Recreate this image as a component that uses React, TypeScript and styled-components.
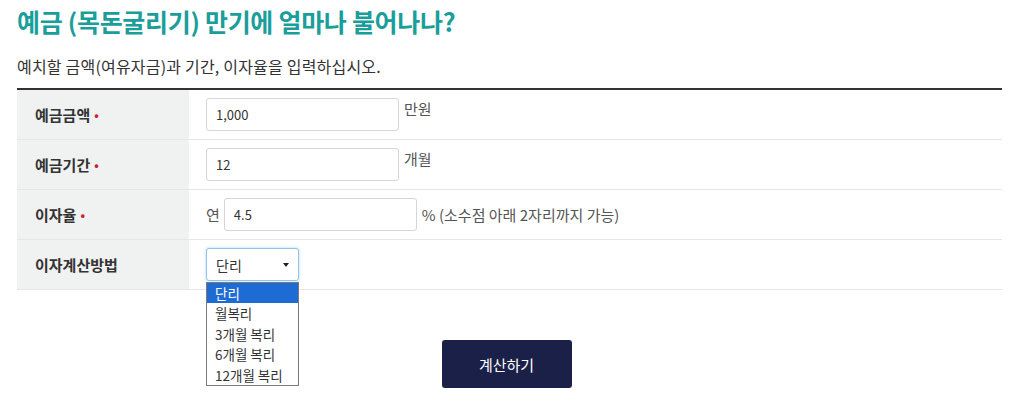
import React from 'react';
import styled, {createGlobalStyle} from 'styled-components';

const GlobalStyle = createGlobalStyle`
    body {
        margin: 0;
        background: #fff;
        font-family: "Noto Sans CJK KR", "Noto Sans", sans-serif;
        color: #333;
    }
`;

const options = ['단리', '월복리', '3개월 복리', '6개월 복리', '12개월 복리'];

const App: React.FC = () => {
    return (
        <Page>
            <GlobalStyle/>
            <Title>예금 (목돈굴리기) 만기에 얼마나 불어나나?</Title>
            <Lead>예치할 금액(여유자금)과 기간, 이자율을 입력하십시오.</Lead>
            <Table>
                <Label>예금금액<Dot>•</Dot></Label>
                <Cell>
                    <Input defaultValue="1,000"/>
                    <Unit $raised>만원</Unit>
                </Cell>
                <Label>예금기간<Dot>•</Dot></Label>
                <Cell>
                    <Input defaultValue="12"/>
                    <Unit $raised>개월</Unit>
                </Cell>
                <Label>이자율<Dot>•</Dot></Label>
                <Cell>
                    <Prefix>연</Prefix>
                    <Input defaultValue="4.5"/>
                    <Unit>% (소수점 아래 2자리까지 가능)</Unit>
                </Cell>
                <Label>이자계산방법</Label>
                <Cell>
                    <SelectWrap>
                        <SelectBox>
                            <span>단리</span>
                            <Caret/>
                        </SelectBox>
                        <OptionList>
                            {options.map((o, i) => (
                                <OptionItem key={o} $active={i === 0}>{o}</OptionItem>
                            ))}
                        </OptionList>
                    </SelectWrap>
                </Cell>
            </Table>
            <Actions>
                <SubmitButton>계산하기</SubmitButton>
            </Actions>
        </Page>
    );
};

export default App;

const Page = styled.div`
    width: 985px;
    padding: 0 17px;
`;

const Title = styled.h2`
    margin: 0;
    padding-top: 5px;
    font-size: 25px;
    line-height: 33px;
    font-weight: 700;
    color: #1a9e9b;
    letter-spacing: -0.3px;
`;

const Lead = styled.p`
    margin: 17px 0 0;
    font-size: 16px;
    line-height: 22px;
    color: #333;
    letter-spacing: 0.2px;
`;

const Table = styled.div`
    margin-top: 11px;
    display: grid;
    grid-template-columns: 172px 1fr;
    border-top: 2px solid #333;
`;

const Label = styled.div`
    display: flex;
    align-items: center;
    height: 49px;
    padding-left: 18px;
    background: #f0f1f1;
    border-bottom: 1px solid #e6e6e6;
    font-size: 15px;
    font-weight: 700;
    color: #333;
`;

const Dot = styled.span`
    color: #d0202a;
    margin-left: 4px;
    font-size: 12px;
`;

const Cell = styled.div`
    display: flex;
    align-items: center;
    height: 49px;
    padding-left: 17px;
    border-bottom: 1px solid #e6e6e6;
    font-size: 15px;
    color: #444;
`;

const Input = styled.input`
    box-sizing: border-box;
    width: 193px;
    height: 33px;
    padding: 0 9px;
    border: 1px solid #d6d6d6;
    border-radius: 3px;
    font-family: "Noto Sans CJK KR", "Noto Sans", sans-serif;
    font-size: 13px;
    color: #333;
    outline: none;
`;

const Unit = styled.span<{ $raised?: boolean }>`
    margin-left: 5px;
    font-size: 15px;
    color: #555;
    align-self: ${p => (p.$raised ? 'flex-start' : 'center')};
    margin-top: ${p => (p.$raised ? '8px' : '0')};
`;

const Prefix = styled.span`
    margin-right: 4px;
    font-size: 15px;
    color: #555;
`;

const SelectWrap = styled.div`
    position: relative;
`;

const SelectBox = styled.div`
    box-sizing: border-box;
    display: flex;
    align-items: center;
    justify-content: space-between;
    width: 93px;
    height: 33px;
    padding: 0 9px;
    border: 1px solid #8ec5e8;
    border-radius: 3px;
    box-shadow: 0 0 3px rgba(100, 170, 230, 0.5);
    font-size: 14px;
    color: #333;
    background: #fff;
`;

const Caret = styled.span`
    width: 0;
    height: 0;
    border-left: 3px solid transparent;
    border-right: 3px solid transparent;
    border-top: 4px solid #222;
`;

const OptionList = styled.ul`
    position: absolute;
    top: 34px;
    left: 0;
    box-sizing: border-box;
    width: 93px;
    margin: 0;
    padding: 0;
    list-style: none;
    background: #fff;
    border: 1px solid #7a7a7a;
    z-index: 2;
`;

const OptionItem = styled.li<{ $active: boolean }>`
    height: 20.4px;
    line-height: 20px;
    padding-left: 8px;
    font-size: 13.5px;
    color: ${p => (p.$active ? '#fff' : '#333')};
    background: ${p => (p.$active ? '#1f6bd4' : '#fff')};
`;

const Actions = styled.div`
    display: flex;
    justify-content: center;
    padding-top: 50px;
    padding-right: 6px;
`;

const SubmitButton = styled.button`
    width: 130px;
    height: 48px;
    border: none;
    border-radius: 3px;
    background-color: #1b2049;
    color: #fff;
    font-family: "Noto Sans CJK KR", "Noto Sans", sans-serif;
    font-size: 15px;
    cursor: pointer;
`;
